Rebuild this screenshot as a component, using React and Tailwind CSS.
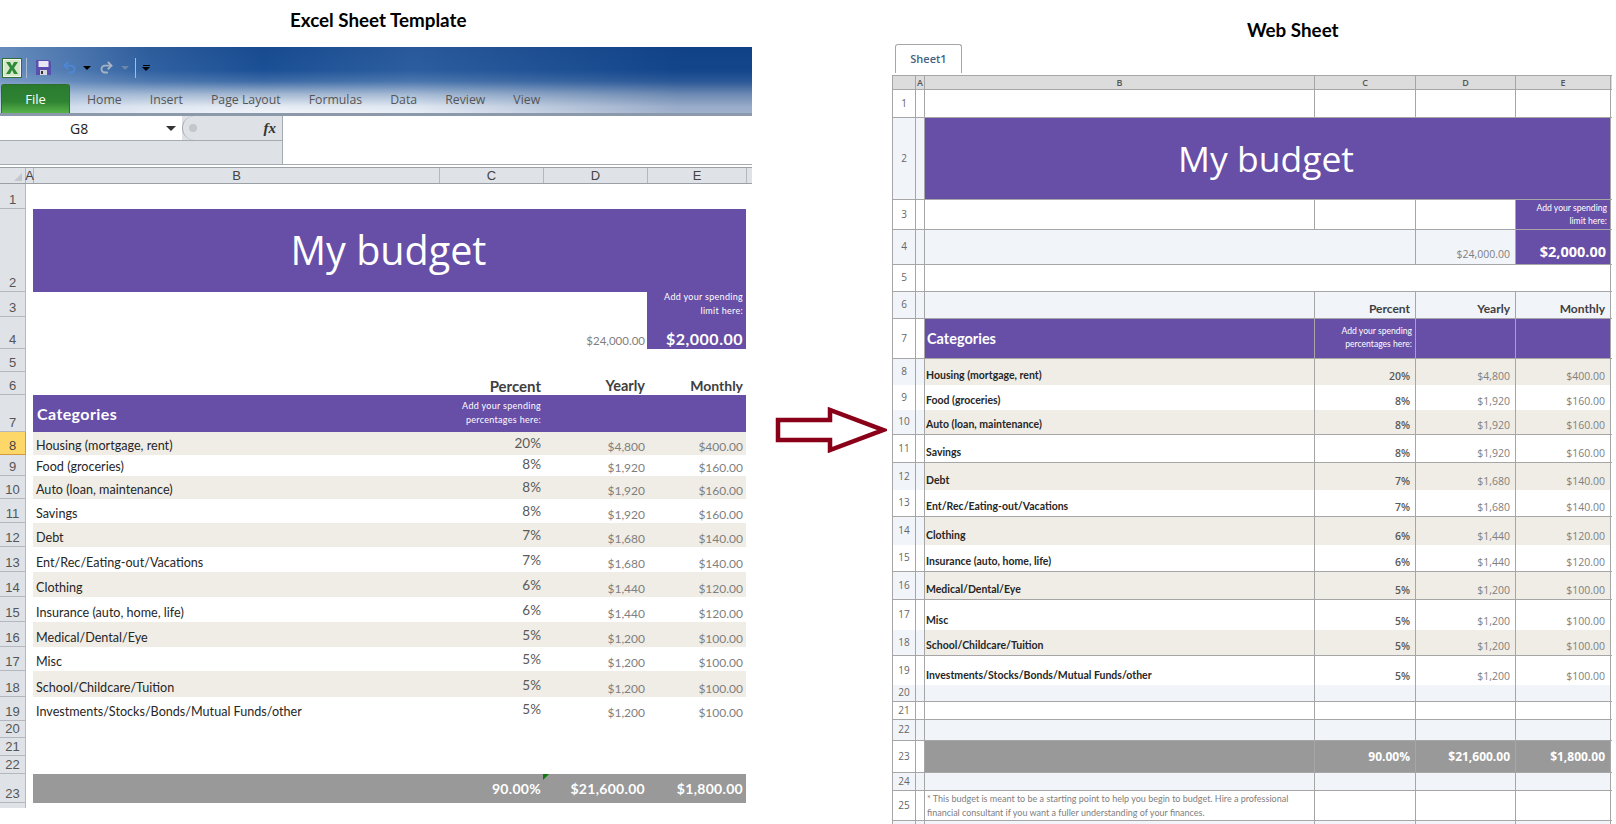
import React from 'react';
import { Undo2, Redo2 } from 'lucide-react';

const budget = [
  ['Housing (mortgage, rent)', '20%', '$4,800', '$400.00'],
  ['Food (groceries)', '8%', '$1,920', '$160.00'],
  ['Auto (loan, maintenance)', '8%', '$1,920', '$160.00'],
  ['Savings', '8%', '$1,920', '$160.00'],
  ['Debt', '7%', '$1,680', '$140.00'],
  ['Ent/Rec/Eating-out/Vacations', '7%', '$1,680', '$140.00'],
  ['Clothing', '6%', '$1,440', '$120.00'],
  ['Insurance (auto, home, life)', '6%', '$1,440', '$120.00'],
  ['Medical/Dental/Eye', '5%', '$1,200', '$100.00'],
  ['Misc', '5%', '$1,200', '$100.00'],
  ['School/Childcare/Tuition', '5%', '$1,200', '$100.00'],
  ['Investments/Stocks/Bonds/Mutual Funds/other', '5%', '$1,200', '$100.00'],
];

// row heights are read off the screenshot, they are not regular
const excelHeights = ['h-[23px]', 'h-[21px]', 'h-[23px]', 'h-[24px]', 'h-[24px]', 'h-[25px]', 'h-[25px]', 'h-[25px]', 'h-[25px]', 'h-[24px]', 'h-[26px]', 'h-[24px]'];
const webHeights = ['h-[26px]', 'h-[25px]', 'h-[25px]', 'h-[28px]', 'h-[27px]', 'h-[27px]', 'h-[28px]', 'h-[27px]', 'h-[28px]', 'h-[30px]', 'h-[26px]', 'h-[29px]'];
const webLines = [false, false, true, true, false, true, false, true, true, false, true, false];

const tabs = ['Home', 'Insert', 'Page Layout', 'Formulas', 'Data', 'Review', 'View'];

const ExcelLogo = () => (
  <svg width="20" height="20" viewBox="0 0 20 20">
    <rect x="0.5" y="0.5" width="19" height="19" fill="#f4f8f0" stroke="#2f6f35" />
    <rect x="2" y="2" width="16" height="16" fill="#d5e8c8" />
    <path d="M4 4h4l2 4 2-4h4l-4 6 4 6h-4l-2-4-2 4H4l4-6z" fill="#2f8a3a" />
  </svg>
);

const SaveIcon = () => (
  <svg width="15" height="15" viewBox="0 0 15 15">
    <path d="M0 0h13l2 2v13H0z" fill="#5a4fae" />
    <rect x="2.5" y="1" width="10" height="6" fill="#e8e8f4" />
    <rect x="4" y="10" width="7" height="5" fill="#d7d7dd" />
    <rect x="5" y="11" width="2" height="3" fill="#333" />
  </svg>
);

const Caret = ({ className }) => (
  <span className={`w-0 h-0 border-x-[4px] border-x-transparent border-t-[4px] ${className}`} />
);

const Ribbon = () => (
  <div className="h-[69px] border-b-[3px] border-[#8b99aa] bg-[linear-gradient(180deg,#174a8f_0%,#1b5096_35%,#3e6ba6_52%,#a5b9d2_72%,#e6ebf3_90%,#f1f4f9_100%)] relative overflow-hidden">
    <div className="absolute inset-0 bg-[linear-gradient(90deg,rgba(170,195,225,0.55)_0%,rgba(170,195,225,0.15)_20%,rgba(170,195,225,0)_35%,rgba(170,195,225,0.12)_55%,rgba(5,50,120,0.35)_90%)]" />
    <div className="relative h-[37px] flex items-center pl-[2px] pt-[4px]">
      <ExcelLogo />
      <span className="ml-[4px] w-[1px] h-[20px] bg-[#a9bcd4]" />
      <span className="ml-[9px]"><SaveIcon /></span>
      <Undo2 size={15} strokeWidth={3} color="#4f86d6" className="ml-[11px]" />
      <Caret className="ml-[6px] border-t-black" />
      <Redo2 size={15} strokeWidth={3} color="#a7b3c0" className="ml-[8px]" />
      <Caret className="ml-[7px] border-t-[#6b86a8]" />
      <span className="ml-[6px] w-[1px] h-[20px] bg-[#a9bcd4]" />
      <span className="ml-[6px] flex flex-col items-center gap-[1px]">
        <span className="w-[7px] h-[1px] bg-black" />
        <Caret className="border-t-black" />
      </span>
    </div>
    <div className="relative h-[29px] flex items-center gap-[28px] pl-[1px] [font-family:'Open_Sans',sans-serif] text-[12.3px] text-[#555]">
      <div className="w-[69px] h-full -mr-[11px] flex items-center justify-center rounded-t-[3px] border border-b-0 border-[#2e6e2c] bg-[linear-gradient(180deg,#2a7a2e_0%,#2f8433_60%,#58b349_100%)] text-white text-[13px] pt-[1px]">File</div>
      {tabs.map((t) => <span key={t} className="pt-[4px]">{t}</span>)}
    </div>
  </div>
);

const FormulaBar = () => (
  <div className="h-[49px] flex border-b border-[#a6abb2]">
    <div className="w-[283px] flex flex-col border-r border-[#a6abb2] bg-[#dee1e6]">
      <div className="h-[25px] flex border-b border-[#a6abb2]">
        <div className="w-[182px] bg-white flex items-center relative [font-family:'Open_Sans',sans-serif] text-[14px] text-[#222]">
          <span className="ml-[70px]">G8</span>
          <Caret className="absolute right-[6px] top-[10px] border-t-[#333] border-x-[5px] border-t-[5px]" />
        </div>
        <div className="flex-1 flex items-center justify-between rounded-l-[12px] border-l border-[#a6abb2] bg-[#dee1e6] pl-[6px] pr-[6px]">
          <span className="w-[8px] h-[8px] rounded-full bg-[#c3c6cb]" />
          <span className="[font-family:'Liberation_Serif',serif] italic font-bold text-[15px] text-[#333]">fx</span>
        </div>
      </div>
    </div>
    <div className="flex-1 bg-white" />
  </div>
);

const ExcelHead = ({ className, children }) => (
  <div className={`shrink-0 flex items-center justify-center border-r border-[#b4b8be] ${className}`}>{children}</div>
);

const ExcelRow = ({ n, h, active, children }) => (
  <div className={`flex ${h}`}>
    <div className={`w-[26px] shrink-0 flex items-end justify-center border-r border-b [font-family:'Liberation_Sans',sans-serif] text-[13px] leading-[16px] ${active ? 'bg-[#fdd868] border-[#d29a3c] text-[#444]' : 'bg-[#dfe2e7] border-[#b4b8be] text-[#555]'}`}>
      {n}
    </div>
    <div className="w-[7px] shrink-0" />
    {children}
  </div>
);

const ExcelSheet = () => (
  <div className="w-[752px] h-[808px] overflow-hidden">
    <div className="h-[47px] pl-[290px] pt-[8px] [font-family:'Lato',sans-serif] font-bold text-[18.8px] leading-[24px] text-black">Excel Sheet Template</div>
    <Ribbon />
    <FormulaBar />
    <div className="h-[2px] bg-white" />
    <div className="h-[17px] flex border-y border-[#9b9fa6] bg-[#dfe2e7] [font-family:'Liberation_Sans',sans-serif] text-[13px] text-[#444]">
      <ExcelHead className="w-[26px] justify-end items-end pr-[3px] pb-[2px]">
        <span className="w-0 h-0 border-l-[8px] border-l-transparent border-b-[8px] border-b-[#c3c6cb]" />
      </ExcelHead>
      <ExcelHead className="w-[8px]">A</ExcelHead>
      <ExcelHead className="w-[406px]">B</ExcelHead>
      <ExcelHead className="w-[104px]">C</ExcelHead>
      <ExcelHead className="w-[104px]">D</ExcelHead>
      <ExcelHead className="w-[99px]">E</ExcelHead>
    </div>
    <div className="[font-family:'Lato',sans-serif]">
      <ExcelRow n="1" h="h-[25px]" />
      <ExcelRow n="2" h="h-[83px]">
        <div className="w-[713px] flex items-center justify-center bg-[#674ea7] text-white text-[39.5px] [font-family:'Open_Sans',sans-serif] pr-[2px]">My budget</div>
      </ExcelRow>
      <ExcelRow n="3" h="h-[25px]">
        <div className="w-[614px]" />
        <div className="w-[99px] bg-[#674ea7] text-white text-[9px] tracking-[0.3px] leading-[14px] text-right pr-[3px] whitespace-nowrap">
          <div className="-mt-[2px]">Add your spending<br />limit here:</div>
        </div>
      </ExcelRow>
      <ExcelRow n="4" h="h-[32px]">
        <div className="w-[614px] flex items-end justify-end pr-[2px] text-[11.5px] leading-[16px] text-[#7f7f7f]">$24,000.00</div>
        <div className="w-[99px] flex items-end justify-end bg-[#674ea7] pr-[3px] text-white font-bold text-[16px] leading-[20px] tracking-[0.5px]">$2,000.00</div>
      </ExcelRow>
      <ExcelRow n="5" h="h-[23px]" />
      <ExcelRow n="6" h="h-[23px]">
        <div className="w-[508px] flex items-end justify-end font-bold text-[#404040] text-[15px] leading-[18px]">Percent</div>
        <div className="w-[104px] flex items-end justify-end font-bold text-[#404040] text-[14.5px] leading-[18px]">Yearly</div>
        <div className="w-[101px] flex items-end justify-end pr-[3px] font-bold text-[#404040] text-[14px] leading-[18px]">Monthly</div>
      </ExcelRow>
      <ExcelRow n="7" h="h-[37px]">
        <div className="w-[713px] flex bg-[#674ea7] text-white">
          <div className="w-[404px] pl-[4px] flex items-center font-bold text-[16px] tracking-[0.4px]">Categories</div>
          <div className="w-[104px] text-right text-[9px] tracking-[0.3px] leading-[14px] pt-[4px] whitespace-nowrap">Add your spending<br />percentages here:</div>
        </div>
      </ExcelRow>
      {budget.map((r, i) => (
        <ExcelRow key={r[0]} n={i + 8} h={excelHeights[i]} active={i === 0}>
          <div className={`w-[713px] flex items-end ${i % 2 === 0 ? 'bg-[#f0ede6]' : ''}`}>
            <div className="w-[404px] pl-[3px] text-[12.6px] leading-[19px] text-[#262626]">{r[0]}</div>
            <div className="w-[104px] pb-[2px] text-right text-[13.5px] text-[#595959]">{r[1]}</div>
            <div className="w-[104px] text-right text-[12px] leading-[16px] text-[#7f7f7f]">{r[2]}</div>
            <div className="w-[101px] pr-[3px] text-right text-[12px] leading-[16px] text-[#7f7f7f]">{r[3]}</div>
          </div>
        </ExcelRow>
      ))}
      <ExcelRow n="20" h="h-[17px]" />
      <ExcelRow n="21" h="h-[18px]" />
      <ExcelRow n="22" h="h-[18px]" />
      <ExcelRow n="23" h="h-[29px]">
        <div className="w-[713px] flex items-center bg-[#999] text-white font-bold text-[14px] tracking-[0.3px] relative">
          <div className="w-[508px] text-right">90.00%</div>
          <div className="w-[104px] text-right">$21,600.00</div>
          <div className="w-[101px] pr-[3px] text-right">$1,800.00</div>
          <span className="absolute left-[510px] top-0 w-0 h-0 border-r-[6px] border-r-transparent border-t-[6px] border-t-[#0f7a0f]" />
        </div>
      </ExcelRow>
      <div className="flex h-[5px]"><div className="w-[26px] bg-[#dfe2e7] border-r border-[#b4b8be]" /></div>
    </div>
  </div>
);

const Arrow = () => (
  <div className="w-[140px] pl-[23px] pt-[407px]">
    <svg width="112" height="46" viewBox="0 0 112 46">
      <path d="M3 13H55V3L108 23L55 43V33H3Z" fill="white" stroke="#8a0018" strokeWidth="4.5" />
    </svg>
  </div>
);

const Cell = ({ className = '', children }) => (
  <div className={`shrink-0 flex border-r border-[#a6a6a6] ${className}`}>{children}</div>
);

const blue = 'bg-[#f1f4f9]';
const purple = 'bg-[#674ea7] text-white';
const lato = "[font-family:'Lato',sans-serif]";

const WebRow = ({ n, h, tint, line = true, children }) => (
  <div className={`flex ${h} ${line ? 'border-b border-[#a6a6a6]' : ''}`}>
    <Cell className={`w-[23px] items-center justify-center pb-[1px] text-[10px] text-[#666] ${tint ? blue : ''}`}>{n}</Cell>
    <Cell className={`w-[9px] ${tint ? blue : ''}`} />
    {children}
  </div>
);

const Blanks = ({ tint }) => (
  <>
    <Cell className={`w-[390px] ${tint ? blue : ''}`} />
    <Cell className={`w-[101px] ${tint ? blue : ''}`} />
    <Cell className={`w-[100px] ${tint ? blue : ''}`} />
    <Cell className={`w-[95px] ${tint ? blue : ''}`} />
  </>
);

const WebSheet = () => (
  <div className="w-[724px] h-[824px] overflow-hidden">
    <div className="h-[44px] pl-[355px] pt-[18px] [font-family:'Lato',sans-serif] font-bold text-[18.8px] leading-[24px] text-black">Web Sheet</div>
    <div className="h-[31px] pl-[3px]">
      <div className="w-[67px] h-[29px] flex items-center justify-center rounded-t-[3px] border border-b-0 border-[#a6a6a6] [font-family:'Open_Sans',sans-serif] font-semibold text-[11px] text-[#44617f]">Sheet1</div>
    </div>
    <div className="w-[720px] border-l border-t border-[#a6a6a6] [font-family:'Open_Sans',sans-serif]">
      <div className="flex h-[14px] border-b border-[#a6a6a6] bg-[#dcdcdc] text-[9px] font-semibold text-[#555]">
        <Cell className="w-[23px]" />
        <Cell className="w-[9px] items-center justify-center">A</Cell>
        <Cell className="w-[390px] items-center justify-center">B</Cell>
        <Cell className="w-[101px] items-center justify-center">C</Cell>
        <Cell className="w-[100px] items-center justify-center">D</Cell>
        <Cell className="w-[95px] items-center justify-center">E</Cell>
      </div>
      <WebRow n="1" h="h-[28px]"><Blanks /></WebRow>
      <WebRow n="2" h="h-[82px]" tint>
        <Cell className={`w-[686px] items-center justify-center text-[35.5px] pr-[3px] ${purple}`}>My budget</Cell>
      </WebRow>
      <WebRow n="3" h="h-[30px]">
        <Cell className="w-[390px]" />
        <Cell className="w-[101px]" />
        <Cell className="w-[100px]" />
        <Cell className={`w-[95px] justify-end text-right text-[8.6px] leading-[13px] pr-[3px] pt-[2px] whitespace-nowrap ${lato} ${purple}`}>
          <span>Add your spending<br />limit here:</span>
        </Cell>
      </WebRow>
      <WebRow n="4" h="h-[35px]" tint>
        <Cell className={`w-[491px] ${blue}`} />
        <Cell className={`w-[100px] items-end justify-end pr-[5px] pb-[1px] text-[10.5px] text-[#808080] ${blue}`}>$24,000.00</Cell>
        <Cell className={`w-[95px] items-end justify-end pr-[4px] pb-[1px] font-bold text-[14.5px] ${purple}`}>$2,000.00</Cell>
      </WebRow>
      <WebRow n="5" h="h-[27px]">
        <Cell className="w-[686px]" />
      </WebRow>
      <WebRow n="6" h="h-[27px]" tint>
        <Cell className={`w-[390px] ${blue}`} />
        <Cell className={`w-[101px] items-end justify-end pr-[5px] font-bold text-[12px] text-[#404040] ${lato} ${blue}`}>Percent</Cell>
        <Cell className={`w-[100px] items-end justify-end pr-[5px] font-bold text-[12px] text-[#404040] ${lato} ${blue}`}>Yearly</Cell>
        <Cell className={`w-[95px] items-end justify-end pr-[5px] font-bold text-[12px] text-[#404040] ${lato} ${blue}`}>Monthly</Cell>
      </WebRow>
      <WebRow n="7" h="h-[40px]">
        <Cell className={`w-[390px] items-center pl-[2px] font-bold text-[14.5px] ${lato} ${purple}`}>Categories</Cell>
        <Cell className={`w-[101px] justify-end text-right text-[8.6px] leading-[13px] pr-[3px] pt-[6px] whitespace-nowrap ${lato} ${purple}`}>
          <span>Add your spending<br />percentages here:</span>
        </Cell>
        <Cell className={`w-[100px] ${purple}`} />
        <Cell className={`w-[95px] ${purple}`} />
      </WebRow>
      {budget.map((r, i) => {
        const bg = i % 2 === 0 ? 'bg-[#f0ede6]' : '';
        return (
          <WebRow key={r[0]} n={i + 8} h={webHeights[i]} tint={i % 2 === 0} line={webLines[i]}>
            <Cell className={`w-[390px] items-end pl-[1px] pb-[1px] text-[10.5px] font-bold text-[#262626] ${lato} ${bg}`}>{r[0]}</Cell>
            <Cell className={`w-[101px] items-end justify-end pr-[5px] text-[10.5px] font-semibold text-[#595959] ${bg}`}>{r[1]}</Cell>
            <Cell className={`w-[100px] items-end justify-end pr-[5px] text-[10.5px] text-[#808080] ${bg}`}>{r[2]}</Cell>
            <Cell className={`w-[95px] items-end justify-end pr-[5px] text-[10.5px] text-[#808080] ${bg}`}>{r[3]}</Cell>
          </WebRow>
        );
      })}
      <WebRow n="20" h="h-[17px]" tint><Blanks tint /></WebRow>
      <WebRow n="21" h="h-[18px]"><Blanks /></WebRow>
      <WebRow n="22" h="h-[21px]" tint><Blanks tint /></WebRow>
      <WebRow n="23" h="h-[32px]">
        <Cell className="w-[390px] bg-[#999]" />
        <Cell className="w-[101px] items-center justify-end pr-[5px] bg-[#999] text-white font-bold text-[12px]">90.00%</Cell>
        <Cell className="w-[100px] items-center justify-end pr-[5px] bg-[#999] text-white font-bold text-[12px]">$21,600.00</Cell>
        <Cell className="w-[95px] items-center justify-end pr-[5px] bg-[#999] text-white font-bold text-[12px]">$1,800.00</Cell>
      </WebRow>
      <WebRow n="24" h="h-[18px]" tint><Blanks tint /></WebRow>
      <WebRow n="25" h="h-[30px]">
        <Cell className={`w-[390px] pl-[2px] pt-[1px] text-[9px] leading-[14px] text-[#808080] whitespace-nowrap ${lato}`}>
          <span>* This budget is meant to be a starting point to help you begin to budget. Hire a professional<br />financial consultant if you want a fuller understanding of your finances.</span>
        </Cell>
        <Cell className="w-[101px]" />
        <Cell className="w-[100px]" />
        <Cell className="w-[95px]" />
      </WebRow>
      <WebRow n="" h="h-[10px]" tint line={false}><Blanks tint /></WebRow>
    </div>
  </div>
);

export default function App() {
  return (
    <div className="w-[1616px] h-[824px] flex bg-white overflow-hidden">
      <ExcelSheet />
      <Arrow />
      <WebSheet />
    </div>
  );
}
